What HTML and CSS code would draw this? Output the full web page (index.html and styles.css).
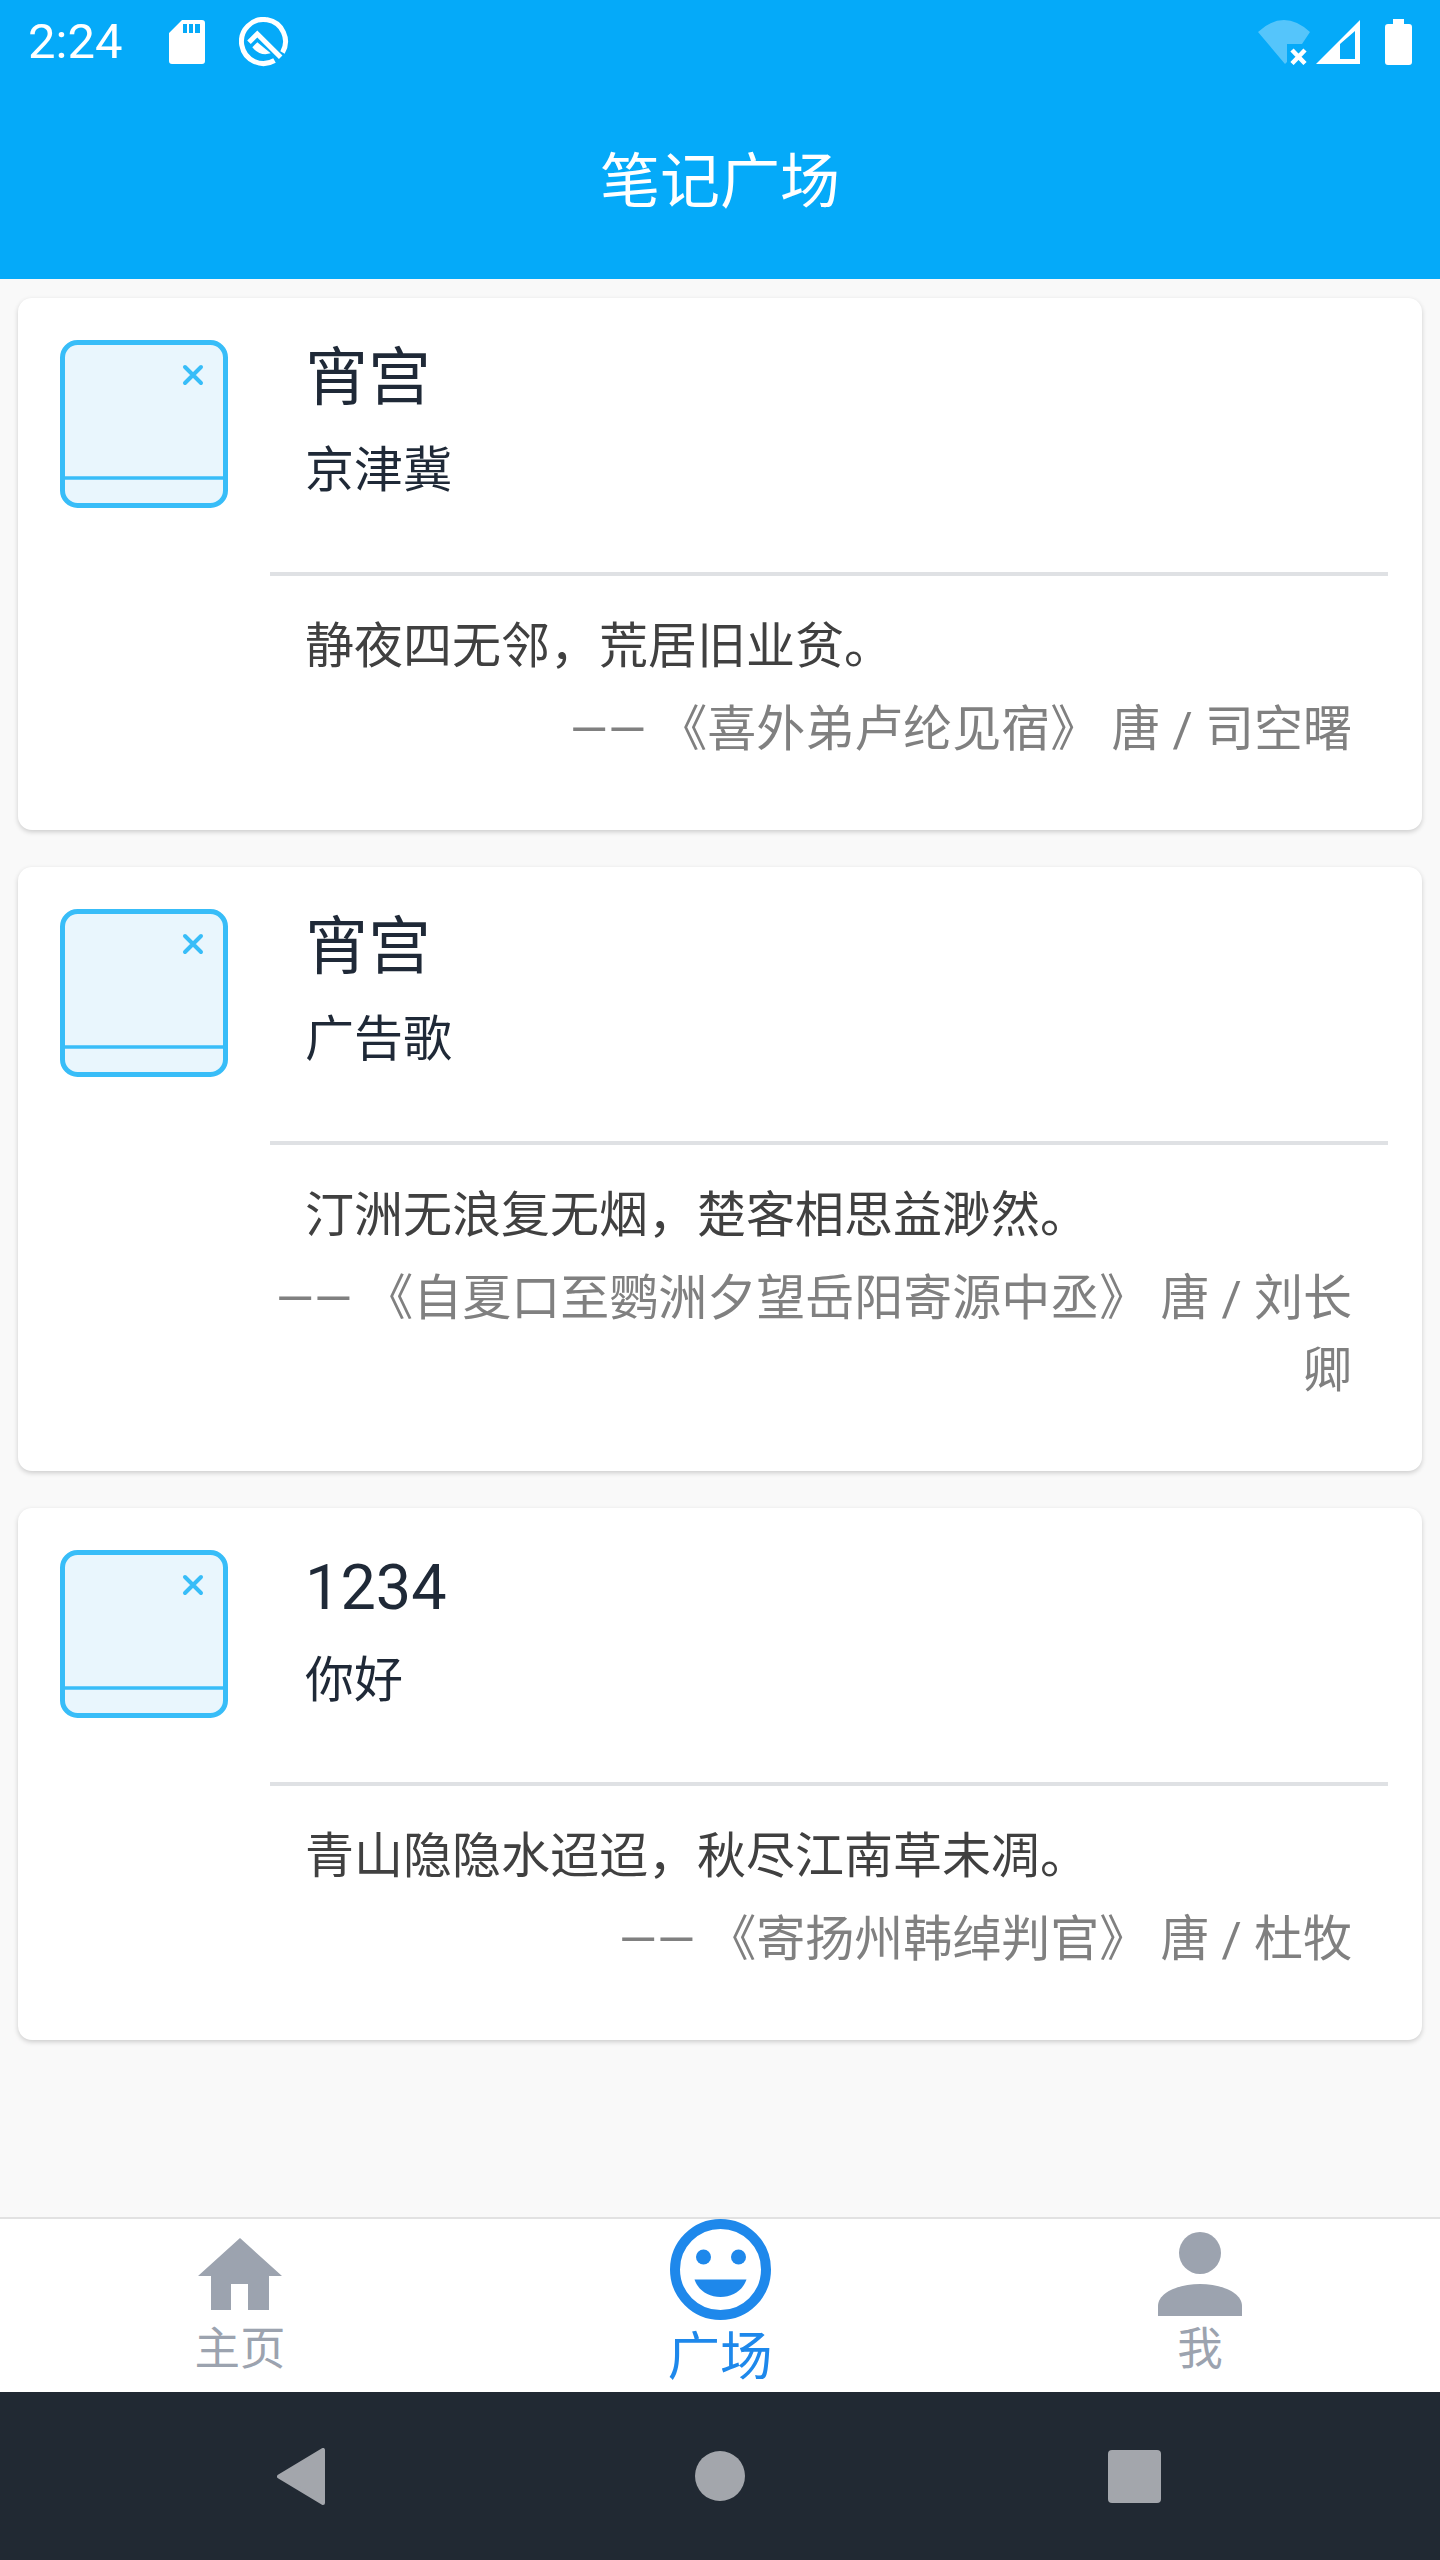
FILE: index.html
```html
<!DOCTYPE html>
<html lang="zh">
<head>
<meta charset="utf-8">
<title>笔记广场</title>
<link rel="stylesheet" href="styles.css">
</head>
<body>
<div class="app">
  <header class="header">
    <div class="status">
      <span class="time">2:24</span>
      <svg class="ic-sd" viewBox="0 0 36 44"><path fill="#fff" fill-rule="evenodd" d="M13 0H33a3 3 0 0 1 3 3V41a3 3 0 0 1-3 3H3a3 3 0 0 1-3-3V13ZM14 4V13H18V4ZM20 4V13H24V4ZM26 4V13H31V4Z"/></svg>
      <svg class="ic-q" viewBox="0 0 50 50"><path fill="none" stroke="#fff" stroke-width="5" d="M35.500 43.500A22 22 0 1 1 43.500 35.500"/><path fill="none" stroke="#fff" stroke-width="5" d="M10 25.300 18.300 17 41.700 40.300"/><path fill="#fff" d="M13.300 30.300 18.300 25.300 31.700 36.300Q21 39.500 13.300 30.300Z"/></svg>
      <span class="status-gap"></span>
      <svg class="ic-wifi" viewBox="0 0 54 46"><path fill="#fff" fill-opacity=".32" d="M0 13Q26-11 52 13L44 25H29V43L27 45Z"/><path stroke="#fff" stroke-width="4.500" d="M34 31 47 44.500M47 31 34 44.500"/></svg>
      <svg class="ic-signal" viewBox="0 0 44 44"><path fill="#fff" fill-rule="evenodd" d="M44 0V44H0ZM39 11 24 24V39H39Z"/></svg>
      <svg class="ic-batt" viewBox="0 0 27 46"><path fill="#fff" d="M8 0H19V5H24a3 3 0 0 1 3 3V43a3 3 0 0 1-3 3H3a3 3 0 0 1-3-3V8a3 3 0 0 1 3-3H8Z"/></svg>
    </div>
    <h1 class="page-title">笔记广场</h1>
  </header>

  <main class="list">
    <article class="card">
      <svg class="thumb" viewBox="0 0 168 168"><rect x="2.500" y="2.500" width="163" height="163" rx="15" fill="#e9f6fd" stroke="#38bdf8" stroke-width="5"/><path d="M4 138H164" stroke="#38bdf8" stroke-width="3.500"/><path d="M125 27 141 43M141 27 125 43" stroke="#38bdf8" stroke-width="4" stroke-linecap="round"/></svg>
      <div class="body">
        <div class="meta">
          <h2 class="title">宵宫</h2>
          <p class="sub">京津冀</p>
        </div>
        <div class="quote">
          <p class="line">静夜四无邻，荒居旧业贫。</p>
          <p class="author">—— 《喜外弟卢纶见宿》 唐 / 司空曙</p>
        </div>
      </div>
    </article>
    <article class="card">
      <svg class="thumb" viewBox="0 0 168 168"><rect x="2.500" y="2.500" width="163" height="163" rx="15" fill="#e9f6fd" stroke="#38bdf8" stroke-width="5"/><path d="M4 138H164" stroke="#38bdf8" stroke-width="3.500"/><path d="M125 27 141 43M141 27 125 43" stroke="#38bdf8" stroke-width="4" stroke-linecap="round"/></svg>
      <div class="body">
        <div class="meta">
          <h2 class="title">宵宫</h2>
          <p class="sub">广告歌</p>
        </div>
        <div class="quote">
          <p class="line">汀洲无浪复无烟，楚客相思益渺然。</p>
          <p class="author">—— 《自夏口至鹦洲夕望岳阳寄源中丞》 唐 / 刘长卿</p>
        </div>
      </div>
    </article>
    <article class="card">
      <svg class="thumb" viewBox="0 0 168 168"><rect x="2.500" y="2.500" width="163" height="163" rx="15" fill="#e9f6fd" stroke="#38bdf8" stroke-width="5"/><path d="M4 138H164" stroke="#38bdf8" stroke-width="3.500"/><path d="M125 27 141 43M141 27 125 43" stroke="#38bdf8" stroke-width="4" stroke-linecap="round"/></svg>
      <div class="body">
        <div class="meta">
          <h2 class="title">1234</h2>
          <p class="sub">你好</p>
        </div>
        <div class="quote">
          <p class="line">青山隐隐水迢迢，秋尽江南草未凋。</p>
          <p class="author">—— 《寄扬州韩绰判官》 唐 / 杜牧</p>
        </div>
      </div>
    </article>
  </main>

  <nav class="tabs">
    <div class="tab tab-home">
      <svg class="ic-home" viewBox="0 0 84 72"><path fill="#9ca3af" d="M42 0 84 38H71V72H50V46H33V72H13V38H0Z"/></svg>
      <span class="tab-label">主页</span>
    </div>
    <div class="tab tab-active">
      <svg class="ic-smile" viewBox="0 0 101 101"><circle cx="50.500" cy="50.500" r="45.500" fill="none" stroke="#1e88eb" stroke-width="10"/><circle cx="33.500" cy="38" r="7.500" fill="#1e88eb"/><circle cx="68.500" cy="38" r="7.500" fill="#1e88eb"/><path fill="#1e88eb" d="M24.500 60.500H76.500C73 71 63 78 50.500 78S28 71 24.500 60.500Z"/></svg>
      <span class="tab-label">广场</span>
    </div>
    <div class="tab tab-me">
      <svg class="ic-person" viewBox="0 0 84 84"><circle cx="42" cy="21" r="21" fill="#9ca3af"/><path fill="#9ca3af" d="M0 84V74C0 60 22 52 42 52S84 60 84 74V84Z"/></svg>
      <span class="tab-label">我</span>
    </div>
  </nav>

  <footer class="sysnav">
    <svg class="ic-back" viewBox="0 0 48 57"><path fill="#a3a6ac" stroke="#a3a6ac" stroke-width="4" stroke-linejoin="round" d="M46 2V55L2 28.500Z"/></svg>
    <span class="ic-home-btn"></span>
    <span class="ic-recent"></span>
  </footer>
</div>
</body>
</html>
```
FILE: styles.css
```css
* { box-sizing: border-box; }
html, body { margin: 0; padding: 0; }
body { font-family: Roboto, "Noto Sans CJK SC", sans-serif; background: #f9f9f9; }
p, h1, h2 { margin: 0; font-weight: 400; }

.app { width: 1440px; height: 2560px; display: flex; flex-direction: column; }

.header { height: 279px; background: #05aaf9; color: #fff; flex: none; }
.status { height: 84px; display: flex; align-items: center; padding: 0 28px 0 28px; }
.time { font-size: 49px; line-height: 84px; width: 141px; }
.ic-sd { width: 36px; height: 44px; }
.ic-q { width: 50px; height: 50px; margin-left: 34px; }
.status-gap { flex: 1; }
.ic-wifi { width: 54px; height: 46px; }
.ic-signal { width: 44px; height: 44px; margin-left: 4px; }
.ic-batt { width: 27px; height: 46px; margin-left: 25px; }
.page-title { font-size: 60px; line-height: 84px; text-align: center; margin-top: 54px; padding-top: 3px; }

.list { flex: 1; padding: 19px 18px 0; display: flex; flex-direction: column; gap: 37px; }
.card { background: #fff; border-radius: 14px; box-shadow: 0 2px 5px rgba(0,0,0,.18); display: flex; padding: 42px 34px 42px 42px; gap: 42px; }
.thumb { width: 168px; height: 168px; flex: none; }
.body { flex: 1; min-width: 0; }
.meta { padding: 0 35px 65px; margin-top: -4px; border-bottom: 4px solid #dfe1e4; }
.title { font-size: 63px; line-height: 84px; color: #1f2937; }
.sub { font-size: 49px; line-height: 72px; color: #1f2937; margin-top: 15px; }
.quote { padding: 35px 36px 22px; }
.line { font-size: 49px; line-height: 72px; color: #404040; margin-left: -1px; }
.author { font-size: 49px; line-height: 72px; color: #808080; text-align: right; margin: 11px 0 0 -32px; }

.tabs { height: 175px; flex: none; background: #fff; border-top: 2px solid #e2e2e2; display: grid; grid-template-columns: repeat(3, 1fr); }
.tab { display: flex; flex-direction: column; align-items: center; color: #9ca3af; }
.tab-label { font-size: 45.500px; line-height: 60px; }
.tab-home { padding-top: 19px; }
.tab-home .tab-label { margin-top: 10px; }
.ic-home { width: 84px; height: 72px; }
.tab-active { color: #1e88eb; }
.tab-active .tab-label { font-size: 52.500px; line-height: 62px; margin-top: 6px; }
.ic-smile { width: 101px; height: 101px; }
.tab-me { padding-top: 13px; }
.tab-me .tab-label { margin-top: 4px; }
.ic-person { width: 84px; height: 84px; }

.sysnav { height: 168px; flex: none; background: #212933; display: flex; align-items: center; padding-left: 277px; }
.ic-back { width: 48px; height: 57px; }
.ic-home-btn { width: 50px; height: 50px; border-radius: 50%; background: #a3a6ac; margin-left: 370px; }
.ic-recent { width: 53px; height: 53px; border-radius: 4px; background: #a3a6ac; margin-left: 363px; }
```
